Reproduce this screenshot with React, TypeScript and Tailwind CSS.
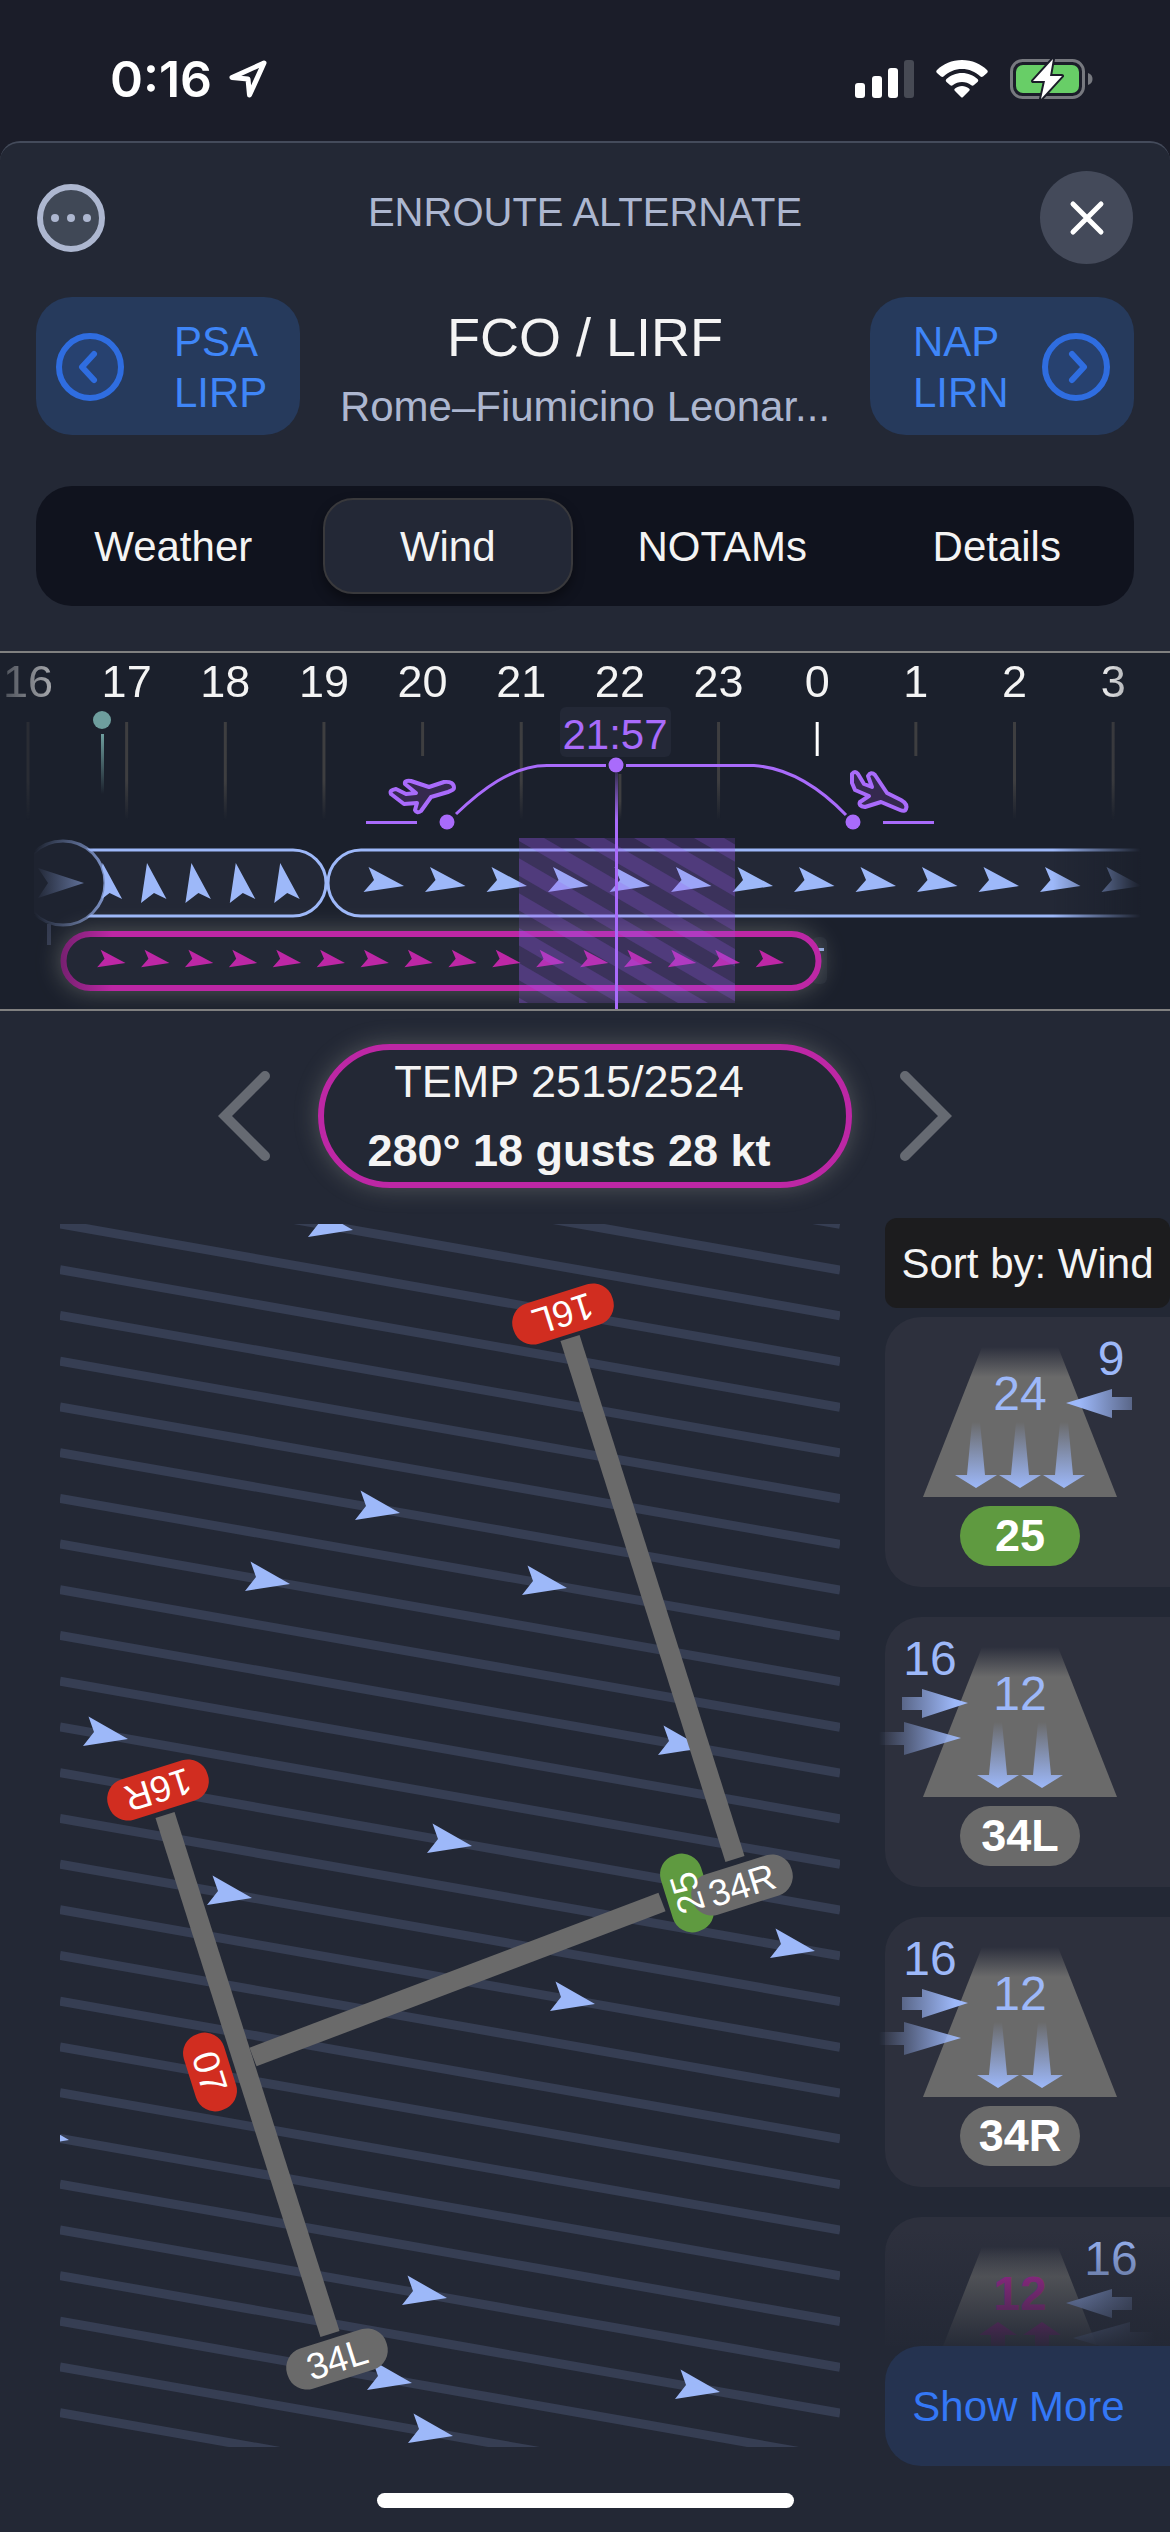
import { useState } from 'react';

type Side = 'left' | 'right';

interface Runway {
  id: string;
  name?: string;
  headwind: number;
  crosswind: number;
  from: Side;
  arrows: number;
  crossArrows: number;
  best?: boolean;
  tailwind?: boolean;
}

const TABS = ['Weather', 'Wind', 'NOTAMs', 'Details'];

const HOURS = ['16', '17', '18', '19', '20', '21', '22', '23', '0', '1', '2', '3'];
const SHORT_TICKS = ['20', '0', '1'];
const hourX = (i: number) => 28 + i * 98.65;

// the last one only peeks out above "Show More", so it carries no name badge
const RUNWAYS: Runway[] = [
  { id: 'rwy-a', name: '25', headwind: 24, crosswind: 9, from: 'right', arrows: 3, crossArrows: 1, best: true },
  { id: 'rwy-b', name: '34L', headwind: 12, crosswind: 16, from: 'left', arrows: 2, crossArrows: 2 },
  { id: 'rwy-c', name: '34R', headwind: 12, crosswind: 16, from: 'left', arrows: 2, crossArrows: 2 },
  { id: 'rwy-d', headwind: 12, crosswind: 16, from: 'right', arrows: 2, crossArrows: 2, tailwind: true },
];

const MAP_ARROWS = [
  [293, 6], [340, 289], [230, 360], [507, 364], [68, 515], [643, 524], [412, 622], [192, 674],
  [755, 727], [535, 780], [9, 916], [387, 1074], [352, 1159], [660, 1168], [393, 1212],
];

const MAP_BADGES = [
  { name: '16L', x: 503, y: 90, angle: 162.5, w: 104, color: '#d12d20' },
  { name: '16R', x: 98, y: 566, angle: 162.5, w: 104, color: '#d12d20' },
  { name: '07', x: 150, y: 848, angle: 72.5, w: 80, color: '#d12d20' },
  { name: '25', x: 627, y: 669, angle: -107.5, w: 80, color: '#5f9a40' },
  { name: '34R', x: 682, y: 661, angle: -17.5, w: 104, color: '#6a6a6a' },
  { name: '34L', x: 277, y: 1135, angle: -17.5, w: 104, color: '#6a6a6a' },
];

const range = (n: number) => Array.from({ length: n }, (_, i) => i);

function StatusBar() {
  return (
    <div className="flex h-[141px] items-center justify-between bg-[#1b1d29] pt-4 pr-[77px] pl-[110px]">
      <div className="flex items-center gap-4">
        <span className="font-[Inter,sans-serif] text-[50px] leading-[60px] font-semibold text-white">0:16</span>
        <svg className="h-10 w-10" viewBox="0 0 40 40" fill="none" stroke="#fff" strokeWidth="5" strokeLinejoin="round">
          <path d="M36 4 L4 18.500 L20 20 L21.500 36 Z" />
        </svg>
      </div>
      <div className="flex items-center gap-[22px]">
        <svg className="h-[38px] w-[59px]" viewBox="0 0 59 38">
          <rect x="0" y="23" width="10" height="15" rx="3" fill="#fff" />
          <rect x="17" y="16" width="10" height="22" rx="3" fill="#fff" />
          <rect x="33" y="8" width="10" height="30" rx="3" fill="#fff" />
          <rect x="49" y="0" width="10" height="38" rx="3" fill="#474a54" />
        </svg>
        <svg className="h-[38px] w-[52px]" viewBox="0 0 52 38" fill="#fff">
          <path d="M26 0 C36 0 45 4 51 10 C52 11 52 12 51 13 L47 16.500 C46 17 45 17 44.500 16.500 C39 11.500 33 9 26 9 C19 9 13 11.500 7.500 16.500 C7 17 6 17 5 16.500 L1 13 C0 12 0 11 1 10 C7 4 16 0 26 0 Z" />
          <path d="M26 13 C32 13 37.500 15.500 41.500 19 C42.500 20 42.500 21 41.500 22 L38 25 C37 26 36 26 35 25 C32.500 23 29.500 22 26 22 C22.500 22 19.500 23 17 25 C16 26 15 26 14 25 L10.500 22 C9.500 21 9.500 20 10.500 19 C14.500 15.500 20 13 26 13 Z" />
          <path d="M26 26 C28.500 26 31 27 33 28.500 C34 29.500 34 30 33 31 L27 37 C26.500 37.800 25.500 37.800 25 37 L19 31 C18 30 18 29.500 19 28.500 C21 27 23.500 26 26 26 Z" />
        </svg>
        <svg className="h-10 w-[83px]" viewBox="0 0 83 40">
          <rect x="1.500" y="1.500" width="72" height="37" rx="11" fill="none" stroke="#77797f" strokeWidth="3" />
          <path d="M78 14 C81 15 82.500 17 82.500 20 C82.500 23 81 25 78 26 Z" fill="#77797f" />
          <rect x="6" y="6" width="63" height="28" rx="7" fill="#68ce67" />
          <path
            d="M43 0 L23 22 H35 L31 40 L52 17 H40 Z"
            fill="#fff"
            stroke="#1b1d29"
            strokeWidth="4"
            strokeLinejoin="round"
            paintOrder="stroke"
          />
        </svg>
      </div>
    </div>
  );
}

function Header() {
  return (
    <header className="grid grid-cols-[1fr_auto_1fr] items-center px-[37px] pt-7">
      <button
        type="button"
        aria-label="More"
        className="flex size-[68px] items-center justify-center gap-2 rounded-full border-6 border-[#adb7d0] bg-[#404856]"
      >
        <span className="size-2 rounded-full bg-[#adb7d0]" />
        <span className="size-2 rounded-full bg-[#adb7d0]" />
        <span className="size-2 rounded-full bg-[#adb7d0]" />
      </button>
      <h1 className="pb-3 text-[40px] leading-[48px] text-[#adb7d0]">ENROUTE ALTERNATE</h1>
      <button
        type="button"
        aria-label="Close"
        className="flex size-[93px] items-center justify-center justify-self-end rounded-full bg-[#444a5a]"
      >
        <svg className="size-9" viewBox="0 0 36 36" stroke="#fff" strokeWidth="5" strokeLinecap="round">
          <path d="M4 4 L32 32 M32 4 L4 32" />
        </svg>
      </button>
    </header>
  );
}

function CircleChevron({ side }: { side: Side }) {
  return (
    <svg className="size-[68px] shrink-0" viewBox="0 0 68 68" stroke="#2f6de0" strokeWidth="6" strokeLinecap="round" strokeLinejoin="round">
      <circle cx="34" cy="34" r="31" fill="#27416f" />
      <path d={side === 'left' ? 'M38 21 L26 34 L38 47' : 'M30 21 L42 34 L30 47'} fill="none" />
    </svg>
  );
}

function AirportNav() {
  return (
    <div className="mt-[33px] flex items-start justify-between px-9">
      <button type="button" className="flex h-[138px] w-[264px] items-center gap-[50px] rounded-[36px] bg-[#263a5c] pt-0.5 pl-5 text-left text-[42px] leading-[51px] text-[#3f86f8]">
        <CircleChevron side="left" />
        <span>
          PSA
          <br />
          LIRP
        </span>
      </button>
      <div className="text-center">
        <h2 className="text-[54px] leading-[80px] text-[#f4f4f4]">FCO / LIRF</h2>
        <p className="text-[42px] leading-[60px] text-[#adb7d0]">Rome–Fiumicino Leonar...</p>
      </div>
      <button type="button" className="flex h-[138px] w-[264px] items-center justify-between rounded-[36px] bg-[#263a5c] pt-0.5 pr-6 pl-[43px] text-left text-[42px] leading-[51px] text-[#3f86f8]">
        <span>
          NAP
          <br />
          LIRN
        </span>
        <CircleChevron side="right" />
      </button>
    </div>
  );
}

function Tabs() {
  const [active, setActive] = useState('Wind');

  return (
    <div role="tablist" className="mx-9 mt-[49px] grid h-[120px] grid-cols-4 rounded-[36px] bg-[#10131e]">
      {TABS.map((tab) => (
        <button
          key={tab}
          type="button"
          role="tab"
          aria-selected={tab === active}
          onClick={() => setActive(tab)}
          className={
            tab === active
              ? 'm-3 rounded-[30px] border-2 border-[#39393c] bg-[#232836] text-[42px] text-[#f4f4f4] shadow-[0_6px_12px_rgba(0,0,0,0.4)]'
              : 'm-3 rounded-[30px] text-[42px] text-[#f4f4f4]'
          }
        >
          {tab}
        </button>
      ))}
    </div>
  );
}

function Timeline() {
  return (
    <section className="mt-[45px] border-y-2 border-[#808080] bg-[#1b202c]">
      <svg className="block h-auto w-full" viewBox="0 0 1170 356">
        <defs>
          <linearGradient id="tick" x1="0" y1="0" x2="0" y2="1">
            <stop offset="0" stopColor="#3e3e40" />
            <stop offset="0.6" stopColor="#3e3e40" />
            <stop offset="1" stopColor="#3e3e40" stopOpacity="0" />
          </linearGradient>
          <linearGradient id="now" x1="0" y1="0" x2="0" y2="1">
            <stop offset="0" stopColor="#6e9e9e" />
            <stop offset="1" stopColor="#6e9e9e" stopOpacity="0" />
          </linearGradient>
          <linearGradient id="needle" x1="0" y1="0" x2="0" y2="1">
            <stop offset="0" stopColor="#a96bfb" stopOpacity="0.2" />
            <stop offset="0.2" stopColor="#a96bfb" />
          </linearGradient>
          <linearGradient id="labelFade" gradientUnits="userSpaceOnUse" x1="0" y1="0" x2="1170" y2="0">
            <stop offset="0" stopColor="#fff" stopOpacity="0.2" />
            <stop offset="0.08" stopColor="#fff" />
            <stop offset="0.94" stopColor="#fff" />
            <stop offset="1" stopColor="#fff" stopOpacity="0.2" />
          </linearGradient>
          <linearGradient id="rowFade" gradientUnits="userSpaceOnUse" x1="0" y1="0" x2="1170" y2="0">
            <stop offset="0.03" stopColor="#fff" stopOpacity="0" />
            <stop offset="0.08" stopColor="#fff" />
            <stop offset="0.9" stopColor="#fff" />
            <stop offset="0.975" stopColor="#fff" stopOpacity="0" />
          </linearGradient>
          <linearGradient id="tempFade" gradientUnits="userSpaceOnUse" x1="60" y1="0" x2="112" y2="0">
            <stop offset="0" stopColor="#75206f" />
            <stop offset="1" stopColor="#bd27a5" />
          </linearGradient>
          <linearGradient id="nowRing" gradientUnits="userSpaceOnUse" x1="34" y1="0" x2="106" y2="0">
            <stop offset="0" stopColor="#9db8f9" stopOpacity="0" />
            <stop offset="1" stopColor="#9db8f9" stopOpacity="0.75" />
          </linearGradient>
          <mask id="labelMask">
            <rect width="1170" height="356" fill="url(#labelFade)" />
          </mask>
          <mask id="rowMask">
            <rect width="1170" height="356" fill="url(#rowFade)" />
          </mask>
          <clipPath id="etaClip">
            <rect x="519" y="185" width="216" height="165" />
          </clipPath>
          <path id="barb" d="M0 0 L-35.500 -19 L-30 -6 L-40.500 6 Z" />
        </defs>

        <g mask="url(#labelMask)">
          {HOURS.map((hour, i) => (
            <text key={hour} x={hourX(i)} y="44" textAnchor="middle" fontSize="45" fill="#f4f4f4">
              {hour}
            </text>
          ))}
          {HOURS.map((hour, i) =>
            SHORT_TICKS.includes(hour) ? (
              <rect key={hour} x={hourX(i) - 1.5} y="69" width="3" height="34" fill={hour === '0' ? '#fff' : '#3e3e40'} />
            ) : (
              <rect key={hour} x={hourX(i) - 1.5} y={hour === '22' ? 121 : 69} width="3" height={hour === '22' ? 46 : 98} fill="url(#tick)" />
            ),
          )}
        </g>

        <circle cx="102" cy="67" r="9" fill="#6e9e9e" />
        <rect x="101" y="81" width="3" height="60" fill="url(#now)" />

        {/* forecast periods */}
        <g mask="url(#rowMask)">
          <rect x="40" y="197" width="286" height="66" rx="33" fill="#232836" stroke="#9db8f9" strokeWidth="3" />
          <rect x="328" y="197" width="900" height="66" rx="33" fill="#232836" stroke="#9db8f9" strokeWidth="3" />
          {range(5).map((i) => (
            <path key={i} d="M0 0 L19.500 36 L7 30 L-6 40 Z" transform={`translate(${102.6 + i * 44.4} 210)`} fill="#9db8f9" />
          ))}
          {range(13).map((i) => (
            <use key={i} href="#barb" x={404 + i * 61.5} y="233" fill="#9db8f9" />
          ))}
        </g>
        <circle cx="63" cy="230" r="42" fill="#1e2330" />
        <rect x="0" y="184" width="34" height="92" fill="#1b202c" />
        <circle cx="63" cy="230" r="42" fill="none" stroke="url(#nowRing)" strokeWidth="3" />
        <path d="M84 230 L38 215 L48 230 L38 245 Z" fill="url(#nowRing)" />
        <rect x="47" y="271" width="4" height="21" fill="#343b50" />

        <rect x="812" y="284" width="15" height="47" rx="6" fill="#232935" />
        <rect x="814" y="295" width="10" height="3" fill="#8ba3dc" />
        <rect
          className="drop-shadow-[0_0_12px_rgba(220,220,200,0.3)]"
          x="63.500"
          y="281"
          width="755"
          height="54"
          rx="27"
          fill="#232836"
          stroke="url(#tempFade)"
          strokeWidth="6"
        />
        {range(16).map((i) => (
          <use key={i} href="#barb" transform={`translate(${125.5 + i * 43.9} 310) scale(0.7)`} fill="#bd27a5" />
        ))}

        {/* arrival window */}
        <g clipPath="url(#etaClip)">
          <rect x="519" y="185" width="216" height="165" fill="#9b5cf0" fillOpacity="0.2" />
          {range(9).map((i) => (
            <path key={i} d={`M${214 + i * 60} 185 h30 l284 165 h-30 Z`} fill="#9b5cf0" fillOpacity="0.22" />
          ))}
        </g>
        <rect x="615" y="120" width="3" height="236" fill="url(#needle)" />

        {/* flight profile */}
        <g fill="none" stroke="#a96bfb" strokeWidth="3">
          <path d="M456 161 C480 138 512 112 548 112.500 H606 M626 112.500 H754 C790 115 822 137 846 162" />
          <path d="M366 169.500 H417 M883 169.500 H934" />
        </g>
        <g fill="#a96bfb">
          <circle cx="447" cy="169" r="7.500" />
          <circle cx="616" cy="112" r="7.500" />
          <circle cx="853" cy="169" r="7.500" />
        </g>
        <g fill="#35294f" stroke="#a96bfb" strokeWidth="4" strokeLinejoin="round">
          <path d="M454 135 Q454 128 444 129 L429 134 L411 128 Q404 127 405 131 L416 140 L406 141 L396 136 Q389 137 391 141 L404 151 L417 150 L415 157 Q417 161 421 158 L431 144 L448 139 Q454 137 454 135 Z" />
          <path d="M852 121 Q855 117 858 121 L864 131 L872 134 L868 123 Q871 118 875 122 L887 140 L901 147 Q908 151 906 156 Q905 159 900 157 L881 149 L865 154 Q858 153 860 149 L869 143 L855 137 L852 130 Z" />
        </g>
        <rect x="560" y="54" width="111" height="50" rx="6" fill="#232836" />
        <text x="615" y="96" textAnchor="middle" fontSize="42" fill="#a96bfb">
          21:57
        </text>
      </svg>
    </section>
  );
}

function PeriodButton({ side }: { side: Side }) {
  return (
    <button type="button" aria-label={side === 'left' ? 'Previous period' : 'Next period'}>
      <svg className="h-[90px] w-[52px]" viewBox="0 0 52 90" fill="none" stroke="#666a72" strokeWidth="10" strokeLinecap="round">
        <path d={side === 'left' ? 'M47 5 L7 45 L47 85' : 'M5 5 L45 45 L5 85'} />
      </svg>
    </button>
  );
}

function PeriodPicker() {
  return (
    <div className="mt-[33px] flex items-center justify-center gap-12">
      <PeriodButton side="left" />
      <div className="flex h-36 w-[534px] flex-col justify-center rounded-full border-6 border-[#bd27a5] pr-8 text-center text-[45px] leading-[69px] text-[#f4f4f4] shadow-[0_0_24px_rgba(220,220,200,0.25)]">
        <p>TEMP 2515/2524</p>
        <p className="font-bold">280° 18 gusts 28 kt</p>
      </div>
      <PeriodButton side="right" />
    </div>
  );
}

function WindMap() {
  return (
    <svg className="mt-1.5 block h-auto min-w-0 flex-1 self-start" viewBox="0 0 780 1223">
      <g stroke="#363e53" strokeWidth="9">
        {range(30).map((i) => {
          const y = (i - 3) * 45.72;
          return <line key={i} x1="0" y1={y} x2="780" y2={y + 137.5} />;
        })}
      </g>
      {MAP_ARROWS.map(([x, y]) => (
        <path key={`${x}-${y}`} d="M0 0 L-39.500 -22.500 L-34 -7 L-45 7 Z" transform={`translate(${x} ${y})`} fill="#9db8f9" />
      ))}
      <g stroke="#6a6a6a" strokeWidth="20">
        <line x1="510" y1="114" x2="675" y2="635" />
        <line x1="105" y1="591" x2="270" y2="1110" />
        <line x1="193" y1="833" x2="602" y2="678" />
      </g>
      {MAP_BADGES.map((b) => (
        <rect key={b.name} x={-b.w / 2} y="-21" width={b.w} height="42" rx="20" fill={b.color} transform={`translate(${b.x} ${b.y}) rotate(${b.angle})`} />
      ))}
      {MAP_BADGES.map((b) => (
        <text key={b.name} y="13" textAnchor="middle" fontSize="37" fill="#fff" transform={`translate(${b.x} ${b.y}) rotate(${b.angle})`}>
          {b.name}
        </text>
      ))}
    </svg>
  );
}

function RunwayCard({ runway }: { runway: Runway }) {
  const { id, name, headwind, crosswind, from, arrows, crossArrows, best, tailwind } = runway;
  const color = tailwind ? '#bd27a5' : '#9db8f9';

  return (
    <article className="flex h-[270px] shrink-0 flex-col rounded-l-[36px] bg-[#2d303d]">
      <svg className="block h-[180px] w-[285px] overflow-visible" viewBox="0 0 285 180">
        <defs>
          <linearGradient id={`${id}-strip`} x1="0" y1="0" x2="0" y2="1">
            <stop offset="0" stopColor="#6a6a6a" stopOpacity="0" />
            <stop offset="0.2" stopColor="#6a6a6a" />
          </linearGradient>
          <linearGradient id={`${id}-head`} x1="0" y1="0" x2="0" y2="1">
            <stop offset="0" stopColor={color} stopOpacity="0" />
            <stop offset="1" stopColor={color} />
          </linearGradient>
          <linearGradient id={`${id}-cross`} x1="0" y1="0" x2="1" y2="0">
            <stop offset="0" stopColor="#9db8f9" />
            <stop offset="0.2" stopColor="#9db8f9" />
            <stop offset="1" stopColor="#9db8f9" stopOpacity="0.4" />
          </linearGradient>
          <linearGradient id={`${id}-cross2`} x1="0" y1="0" x2="1" y2="0">
            <stop offset="0" stopColor="#9db8f9" />
            <stop offset="1" stopColor="#9db8f9" stopOpacity="0" />
          </linearGradient>
        </defs>
        <path d="M97 30 H173 L232 180 H38 Z" fill={`url(#${id}-strip)`} />
        <text x="135" y="93" textAnchor="middle" fontSize="48" fontWeight={tailwind ? 700 : 400} fill={color}>
          {headwind}
        </text>
        {range(arrows).map((i) => {
          const x = 135 + (i - (arrows - 1) / 2) * 44;
          return tailwind ? (
            <path key={i} d="M0 105 L19 118 H7 V171 H-7 V118 H-19 Z" transform={`translate(${x} 0)`} fill={color} />
          ) : (
            <path key={i} d="M-4 105 H4 L9 158 H21 L0 171 L-21 158 H-9 Z" transform={`translate(${x} 0)`} fill={`url(#${id}-head)`} />
          );
        })}
        <text x={from === 'right' ? 226 : 45} y="58" textAnchor="middle" fontSize="48" fill="#9db8f9">
          {crosswind}
        </text>
        <g transform={from === 'right' ? undefined : 'translate(264 0) scale(-1 1)'}>
          <path d="M181 86 L227 72 V80 H247 V93 H227 V101 Z" fill={`url(#${id}-cross)`} />
          {crossArrows > 1 ? <path d="M188 121 L245 105 V115 H270 V128 H245 V138 Z" fill={`url(#${id}-cross2)`} /> : null}
        </g>
      </svg>
      {name ? (
        <div
          className={
            best
              ? 'mt-[9px] ml-[75px] flex h-[60px] w-[120px] items-center justify-center rounded-full bg-[#5f9a40] text-[45px] font-bold text-white'
              : 'mt-[9px] ml-[75px] flex h-[60px] w-[120px] items-center justify-center rounded-full bg-[#6a6a6a] text-[45px] font-bold text-white'
          }
        >
          {name}
        </div>
      ) : null}
    </article>
  );
}

function RunwayList() {
  return (
    <aside className="w-[285px] shrink-0">
      <button type="button" className="h-[90px] w-full rounded-xl bg-[#1c1c1e] text-[42px] whitespace-nowrap text-[#f4f4f4]">
        Sort by: Wind
      </button>
      <div className="relative mt-[9px] flex h-[1029px] flex-col gap-[30px] overflow-x-visible overflow-y-clip">
        {RUNWAYS.map((runway) => (
          <RunwayCard key={runway.id} runway={runway} />
        ))}
        <div className="absolute inset-x-0 bottom-0 h-[129px] bg-linear-to-b from-[#232835]/0 from-10% to-[#232835]/95" />
      </div>
      <button type="button" className="h-[120px] w-full rounded-l-[36px] bg-[#253350] pr-[18px] text-[42px] whitespace-nowrap text-[#3478f6]">
        Show More
      </button>
    </aside>
  );
}

export default function App() {
  return (
    <div className="min-h-screen bg-[#1b1d29] font-['Liberation_Sans',Arial,sans-serif]">
      <StatusBar />
      <div className="overflow-hidden rounded-t-[20px] border-t-2 border-[#444b5b] bg-[#232835] pb-6">
        <Header />
        <AirportNav />
        <Tabs />
        <Timeline />
        <PeriodPicker />
        <main className="mt-[30px] flex gap-[45px] pl-15">
          <WindMap />
          <RunwayList />
        </main>
        <div className="mx-auto mt-[27px] h-[15px] w-[417px] rounded-full bg-white" />
      </div>
    </div>
  );
}
